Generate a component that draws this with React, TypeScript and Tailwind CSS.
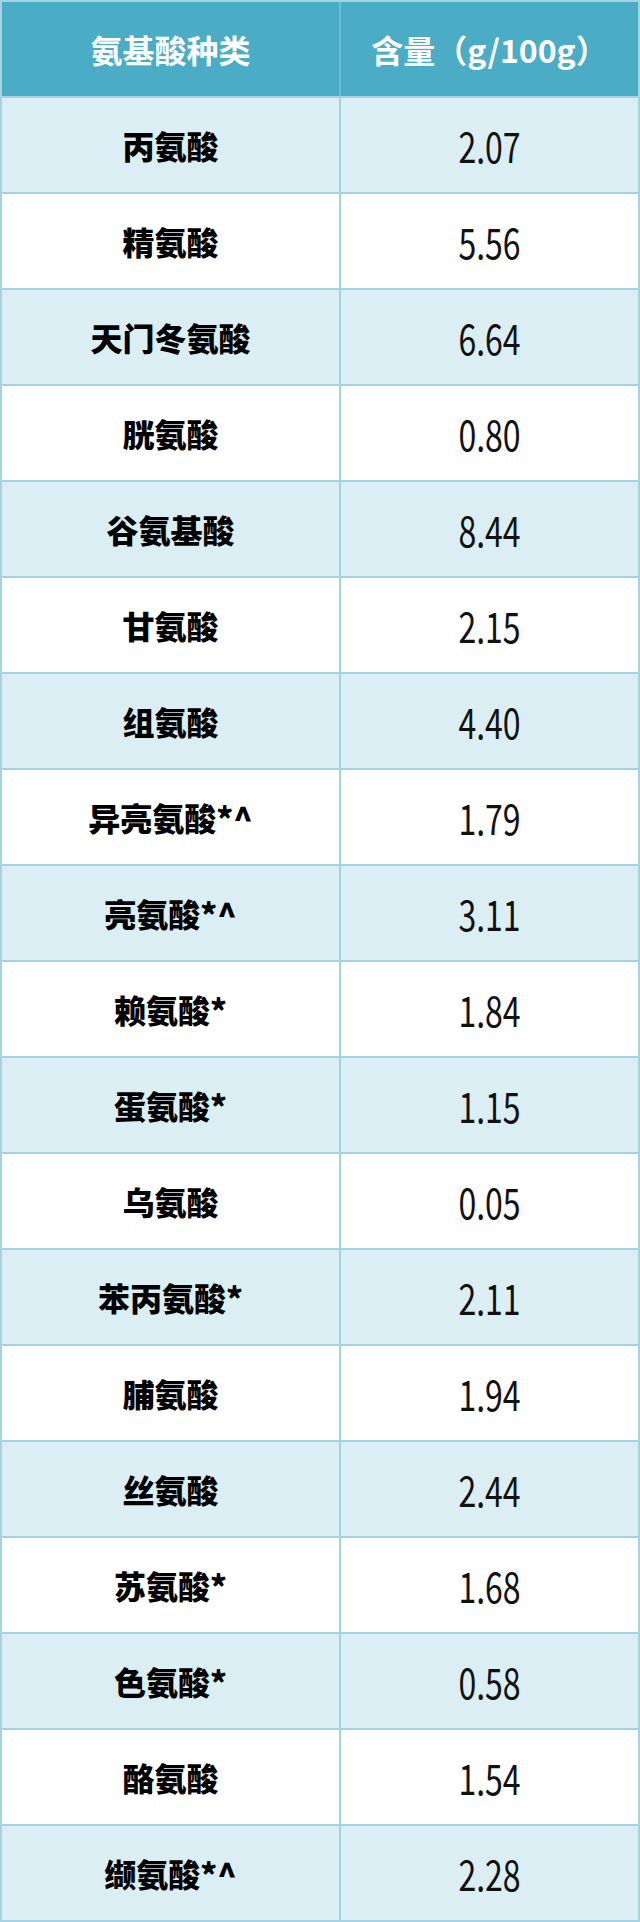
import React from "react";

const rows: [string, string][] = [
  ["丙氨酸", "2.07"],
  ["精氨酸", "5.56"],
  ["天门冬氨酸", "6.64"],
  ["胱氨酸", "0.80"],
  ["谷氨基酸", "8.44"],
  ["甘氨酸", "2.15"],
  ["组氨酸", "4.40"],
  ["异亮氨酸*^", "1.79"],
  ["亮氨酸*^", "3.11"],
  ["赖氨酸*", "1.84"],
  ["蛋氨酸*", "1.15"],
  ["乌氨酸", "0.05"],
  ["苯丙氨酸*", "2.11"],
  ["脯氨酸", "1.94"],
  ["丝氨酸", "2.44"],
  ["苏氨酸*", "1.68"],
  ["色氨酸*", "0.58"],
  ["酪氨酸", "1.54"],
  ["缬氨酸*^", "2.28"],
];

export default function App() {
  return (
    <div className="w-[640px] h-[1922px] bg-white border-2 border-[#a5d3e2] flex flex-col font-['Noto_Sans_CJK_SC','Noto_Sans',sans-serif]">
      <div className="grid grid-cols-[337px_1fr] h-[94px] bg-[#4bacc6] text-white">
        <div className="flex items-center justify-center text-[32px] font-bold">
          氨基酸种类
        </div>
        <div className="flex items-center justify-center border-l-2 border-[#6cbed4] text-[32px] font-bold">
          含量（g/100g）
        </div>
      </div>
      {rows.map(([name, val], i) => (
        <div
          key={name}
          className={
            i % 2 === 0
              ? "grid grid-cols-[337px_1fr] h-[96px] border-t-2 border-[#a5d3e2] bg-[#daeef3]"
              : "grid grid-cols-[337px_1fr] h-[96px] border-t-2 border-[#a5d3e2] bg-white"
          }
        >
          <div className="flex items-center justify-center text-[32px] font-black text-black">
            {name}
          </div>
          <div className="flex items-center justify-center border-l-2 border-[#a5d3e2] text-[#111]">
            <span className="inline-block text-[32px] leading-none scale-y-[1.3]">{val}</span>
          </div>
        </div>
      ))}
    </div>
  );
}
